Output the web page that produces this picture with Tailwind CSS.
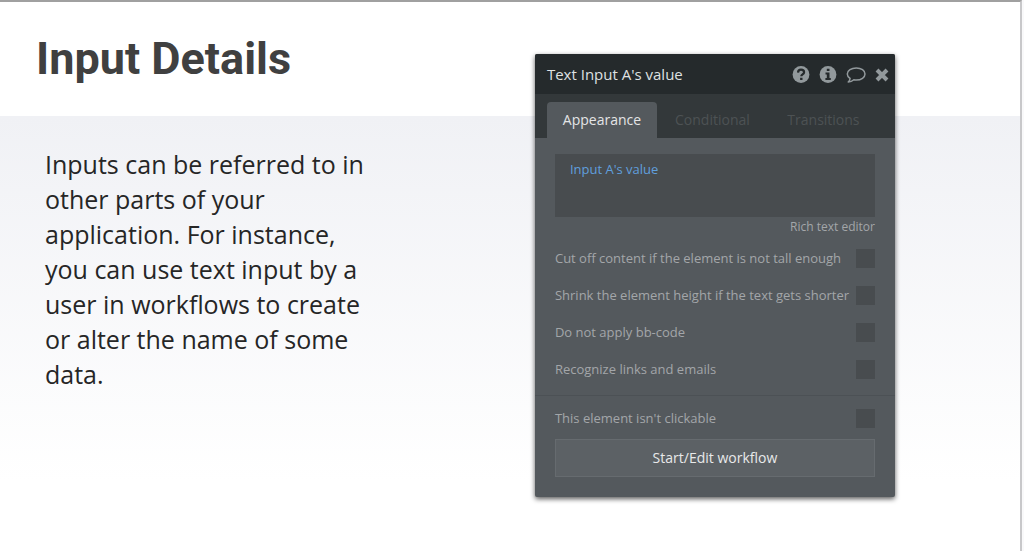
<!DOCTYPE html>
<html lang="en">
<head>
<meta charset="utf-8">
<meta name="viewport" content="width=device-width, initial-scale=1">
<title>Input Details</title>
<script src="https://cdn.jsdelivr.net/npm/@tailwindcss/browser@4"></script>
</head>
<body class="min-h-screen bg-[#f9f9fa] pr-[2px] font-['Open_Sans',sans-serif]">
<main class="grid min-h-screen grid-cols-[536fr_486fr] items-start border-t-2 border-r-2 border-t-[#a0a0a0] border-r-[#c8c8ca] bg-[linear-gradient(#fff_114px,#f0f1f5_114px,#fff_480px)]">
  <section>
    <header class="flex h-[114px] items-center pl-9">
      <h1 class="font-['Roboto',sans-serif] text-[45px] leading-[54px] font-bold text-[#404040]">Input Details</h1>
    </header>
    <p class="ml-[45px] max-w-[335px] pt-[31px] text-[25px] leading-[35px] text-[#262626]">Inputs can be referred to in other parts of your application. For instance, you can use text input by a user in workflows to create or alter the name of some data.</p>
  </section>

  <section class="mt-[52px] w-[360px] overflow-hidden rounded-[2px] bg-[#54595d] text-[13px] leading-[18px] text-[#a3a6a9] shadow-[0_2px_5px_rgba(0,0,0,0.65)]" aria-label="Property editor">
    <header class="flex h-10 items-center justify-between bg-[#252a2c] pr-[6px] pl-3">
      <h2 class="text-[15px] text-[#dfe1e2]">Text Input A's value</h2>
      <div class="flex items-center gap-[9px] text-[#92999c]">
        <button type="button" aria-label="Help">
          <svg class="block size-[18px]" viewBox="0 0 18 18"><circle cx="9" cy="9.500" r="8.400" fill="currentColor"/><path d="M6 7.600C6.100 5.400 7.400 4.700 9 4.700c1.800 0 3.100 1 3.100 2.600 0 2.200-2.800 2.100-2.800 4" fill="none" stroke="#252a2c" stroke-width="2.200"/><path d="M8.100 12.700h2.400v2.200H8.100z" fill="#252a2c"/></svg>
        </button>
        <button type="button" aria-label="Information">
          <svg class="block size-[18px]" viewBox="0 0 18 18"><circle cx="9" cy="9.500" r="8.400" fill="currentColor"/><path d="M7.800 3.700h2.700v2.300H7.800zM6.500 7.500h4v5.500h1.300v1.900H6.400v-1.900h1.400V9.400H6.500z" fill="#252a2c"/></svg>
        </button>
        <button type="button" aria-label="Comment">
          <svg class="block h-[18px] w-5" viewBox="0 0 20 18"><path d="M10.300 3c5 0 8.700 2.600 8.700 6s-3.700 6-8.700 6c-.9 0-1.700-.1-2.500-.2-1.500 1.300-3.200 2-5.600 2.200 1.200-1 1.700-2 1.900-3.500C2.400 12.400 1.300 10.800 1.300 9c0-3.400 4-6 9-6z" fill="none" stroke="currentColor" stroke-width="1.500" stroke-linejoin="round"/></svg>
        </button>
        <button type="button" aria-label="Close">
          <svg class="block h-[18px] w-[14px]" viewBox="0 0 14 18"><path d="M2 5l10 10M12 5L2 15" stroke="currentColor" stroke-width="4"/></svg>
        </button>
      </div>
    </header>

    <div role="tablist" class="flex h-11 items-end bg-[#33383a] pl-3 text-[14px] text-[#4d5254]">
      <button type="button" role="tab" aria-selected="true" class="h-9 w-[110px] rounded-t-[4px] bg-[#54595d] text-[#e4e5e6]">Appearance</button>
      <button type="button" role="tab" aria-selected="false" class="h-9 w-[111px]">Conditional</button>
      <button type="button" role="tab" aria-selected="false" class="h-9 w-[111px]">Transitions</button>
    </div>

    <div class="px-5 pt-4">
      <textarea aria-label="Text content" class="block h-[63px] w-full resize-none bg-[#484c4f] px-[15px] py-[6px] text-[#609fdd] outline-none">Input A's value</textarea>
      <div class="flex h-5 items-center justify-end text-[12px]"><a href="#">Rich text editor</a></div>
      <div class="flex flex-col pt-[3px]">
        <label class="flex h-[37px] items-center justify-between whitespace-nowrap"><span class="pb-[2px]">Cut off content if the element is not tall enough</span><input type="checkbox" class="size-[19px] shrink-0 appearance-none bg-[#484c4f]"></label>
        <label class="flex h-[37px] items-center justify-between whitespace-nowrap"><span class="pb-[2px]">Shrink the element height if the text gets shorter</span><input type="checkbox" class="size-[19px] shrink-0 appearance-none bg-[#484c4f]"></label>
        <label class="flex h-[37px] items-center justify-between whitespace-nowrap"><span class="pb-[2px]">Do not apply bb-code</span><input type="checkbox" class="size-[19px] shrink-0 appearance-none bg-[#484c4f]"></label>
        <label class="flex h-[37px] items-center justify-between whitespace-nowrap"><span class="pb-[2px]">Recognize links and emails</span><input type="checkbox" class="size-[19px] shrink-0 appearance-none bg-[#484c4f]"></label>
      </div>
    </div>
    <div class="mt-[7px] border-t border-[#4c5155] px-5 pt-1 pb-5">
      <label class="flex h-[37px] items-center justify-between"><span class="pb-[2px]">This element isn't clickable</span><input type="checkbox" class="size-[19px] shrink-0 appearance-none bg-[#484c4f]"></label>
      <button type="button" class="mt-[2px] h-[38px] w-full border border-[#666b6f] bg-[#5c6165] text-[14px] text-[#e8e9ea]">Start/Edit workflow</button>
    </div>
  </section>
</main>
</body>
</html>
